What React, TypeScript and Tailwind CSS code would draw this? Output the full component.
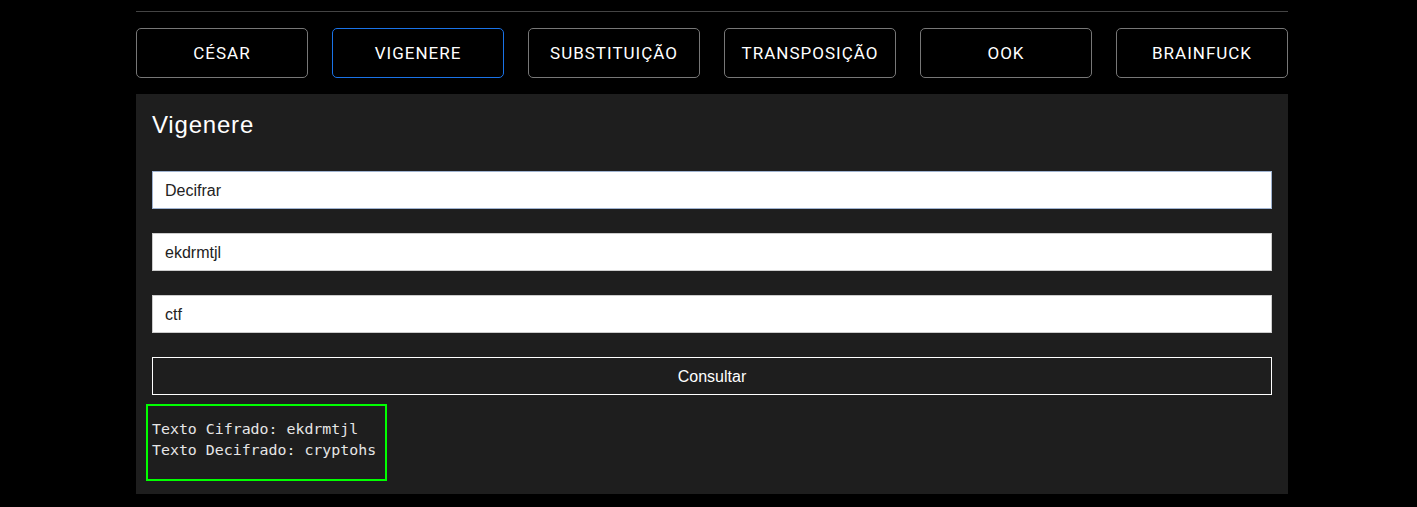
import { useState } from 'react';

const ciphers = ['CÉSAR', 'VIGENERE', 'SUBSTITUIÇÃO', 'TRANSPOSIÇÃO', 'OOK', 'BRAINFUCK'];

function App() {
    const [active, setActive] = useState('VIGENERE');

    return (
        <div className="min-h-[507px] bg-black font-['Liberation_Sans',Arial,sans-serif]">
            <div className="w-[1152px] ml-[136px] pt-[11px]">
                <div className="h-px bg-[#444]" />
                <nav className="flex gap-6 mt-4">
                    {ciphers.map((name) => (
                        <button
                            key={name}
                            type="button"
                            onClick={() => setActive(name)}
                            className={`w-[172px] h-[50px] pt-[2px] rounded-[5px] border bg-black text-white text-[17px] tracking-[1px] font-['Roboto',sans-serif] ${
                                active === name ? 'border-[#1a73e8]' : 'border-[#777]'
                            }`}
                        >
                            {name}
                        </button>
                    ))}
                </nav>
                <section className="mt-4 bg-[#1e1e1e] px-4 pt-4 pb-[13px]">
                    <h2 className="text-white text-[24px] leading-[29px] tracking-[0.8px]">Vigenere</h2>
                    <div className="mt-8 flex flex-col gap-6">
                        <input
                            defaultValue="Decifrar"
                            className="h-[38px] bg-white border border-[#9fb3d1] px-3 pt-[2px] text-[16px] text-[#222] outline-none"
                        />
                        <input
                            defaultValue="ekdrmtjl"
                            className="h-[38px] bg-white border border-[#ccc] px-3 pt-[2px] text-[16px] text-[#222] outline-none"
                        />
                        <input
                            defaultValue="ctf"
                            className="h-[38px] bg-white border border-[#ccc] px-3 pt-[2px] text-[16px] text-[#222] outline-none"
                        />
                        <button
                            type="button"
                            className="h-[38px] pt-[2px] border border-white text-white text-[16px]"
                        >
                            Consultar
                        </button>
                    </div>
                    <div className="mt-[9px] ml-[-6px] w-[241px] border-2 border-[#00ff00] pl-1 pt-[13px] pb-[18px] font-['DejaVu_Sans_Mono',monospace] text-[14.9px] leading-[21px] text-[#e6e6e6] whitespace-pre">
                        <div>Texto Cifrado: ekdrmtjl</div>
                        <div>Texto Decifrado: cryptohs</div>
                    </div>
                </section>
            </div>
        </div>
    );
}

export default App;
